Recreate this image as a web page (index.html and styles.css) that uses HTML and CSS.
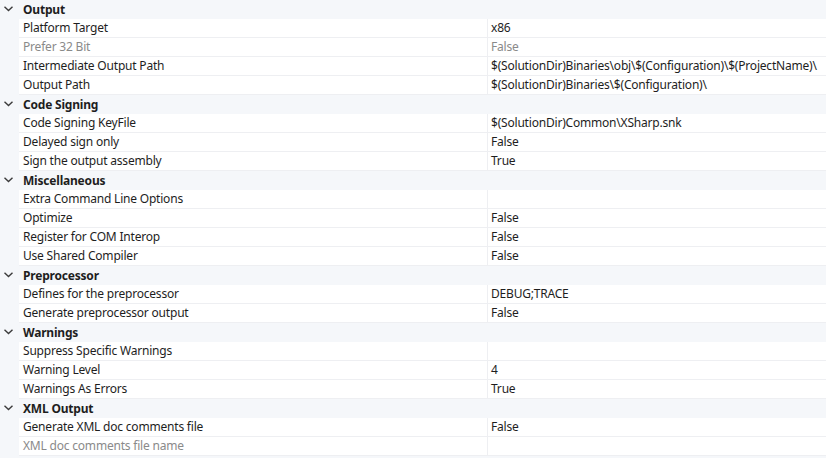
FILE: index.html
```html
<!DOCTYPE html>
<html>
<head>
<meta charset="utf-8">
<link rel="stylesheet" href="styles.css">
</head>
<body>
<div class="grid">
  <div class="cat"><span class="chev"><svg width="9" height="6" viewBox="0 0 9 6"><path d="M0.5 0.8 L4.5 4.6 L8.5 0.8" fill="none" stroke="#3c3c3c" stroke-width="1.4"/></svg></span><span class="cat-name">Output</span></div>
  <div class="row"><div class="name">Platform Target</div><div class="val">x86</div></div>
  <div class="row dis"><div class="name">Prefer 32 Bit</div><div class="val">False</div></div>
  <div class="row"><div class="name">Intermediate Output Path</div><div class="val">$(SolutionDir)Binaries\obj\$(Configuration)\$(ProjectName)\</div></div>
  <div class="row"><div class="name">Output Path</div><div class="val">$(SolutionDir)Binaries\$(Configuration)\</div></div>

  <div class="cat"><span class="chev"><svg width="9" height="6" viewBox="0 0 9 6"><path d="M0.5 0.8 L4.5 4.6 L8.5 0.8" fill="none" stroke="#3c3c3c" stroke-width="1.4"/></svg></span><span class="cat-name">Code Signing</span></div>
  <div class="row"><div class="name">Code Signing KeyFile</div><div class="val">$(SolutionDir)Common\XSharp.snk</div></div>
  <div class="row"><div class="name">Delayed sign only</div><div class="val">False</div></div>
  <div class="row"><div class="name">Sign the output assembly</div><div class="val">True</div></div>

  <div class="cat"><span class="chev"><svg width="9" height="6" viewBox="0 0 9 6"><path d="M0.5 0.8 L4.5 4.6 L8.5 0.8" fill="none" stroke="#3c3c3c" stroke-width="1.4"/></svg></span><span class="cat-name">Miscellaneous</span></div>
  <div class="row"><div class="name">Extra Command Line Options</div><div class="val"></div></div>
  <div class="row"><div class="name">Optimize</div><div class="val">False</div></div>
  <div class="row"><div class="name">Register for COM Interop</div><div class="val">False</div></div>
  <div class="row"><div class="name">Use Shared Compiler</div><div class="val">False</div></div>

  <div class="cat"><span class="chev"><svg width="9" height="6" viewBox="0 0 9 6"><path d="M0.5 0.8 L4.5 4.6 L8.5 0.8" fill="none" stroke="#3c3c3c" stroke-width="1.4"/></svg></span><span class="cat-name">Preprocessor</span></div>
  <div class="row"><div class="name">Defines for the preprocessor</div><div class="val">DEBUG;TRACE</div></div>
  <div class="row"><div class="name">Generate preprocessor output</div><div class="val">False</div></div>

  <div class="cat"><span class="chev"><svg width="9" height="6" viewBox="0 0 9 6"><path d="M0.5 0.8 L4.5 4.6 L8.5 0.8" fill="none" stroke="#3c3c3c" stroke-width="1.4"/></svg></span><span class="cat-name">Warnings</span></div>
  <div class="row"><div class="name">Suppress Specific Warnings</div><div class="val"></div></div>
  <div class="row"><div class="name">Warning Level</div><div class="val">4</div></div>
  <div class="row"><div class="name">Warnings As Errors</div><div class="val">True</div></div>

  <div class="cat"><span class="chev"><svg width="9" height="6" viewBox="0 0 9 6"><path d="M0.5 0.8 L4.5 4.6 L8.5 0.8" fill="none" stroke="#3c3c3c" stroke-width="1.4"/></svg></span><span class="cat-name">XML Output</span></div>
  <div class="row"><div class="name">Generate XML doc comments file</div><div class="val">False</div></div>
  <div class="row dis"><div class="name">XML doc comments file name</div><div class="val"></div></div>
</div>
</body>
</html>
```

FILE: styles.css
```css
html, body {
  margin: 0;
  padding: 0;
  background: #f5f7fa;
}
body {
  width: 826px;
  height: 458px;
  overflow: hidden;
  font-family: "Noto Sans", "Open Sans", sans-serif;
  font-size: 12px;
  letter-spacing: -0.2px;
  color: #1e1e1e;
}
.grid {
  display: flex;
  flex-direction: column;
}
.cat {
  height: 19px;
  display: flex;
  align-items: center;
  background: #f5f7fa;
}
.chev {
  width: 23px;
  display: flex;
  padding-left: 4px;
  box-sizing: border-box;
  margin-top: -1px;
}
.cat-name {
  font-weight: bold;
}
.row {
  height: 19px;
  margin-left: 19px;
  display: flex;
  background: #ffffff;
  border-bottom: 1px solid #eeeff2;
  box-sizing: border-box;
}
.name {
  width: 469px;
  padding-left: 4px;
  box-sizing: border-box;
  line-height: 18px;
  white-space: nowrap;
  border-right: 1px solid #eeeff2;
}
.val {
  flex: 1;
  padding-left: 3px;
  line-height: 18px;
  white-space: nowrap;
}
.dis .name, .dis .val {
  color: #8a8a8a;
}
```
